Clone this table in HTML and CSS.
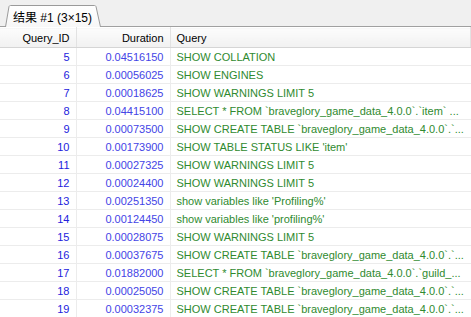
FILE: index.html
```html
<!DOCTYPE html>
<html lang="zh">
<head>
    <meta charset="UTF-8">
    <title>结果 #1</title>
    <link rel="stylesheet" href="styles.css">
</head>
<body>
    <div class="tab-bar">
        <div class="tab">
            <svg class="tab-shape" width="96" height="22" viewBox="0 0 96 22">
                <defs>
                    <linearGradient id="tabfill" x1="0" y1="0" x2="0" y2="1">
                        <stop offset="0" stop-color="#ffffff"/>
                        <stop offset="1" stop-color="#f7f7f7"/>
                    </linearGradient>
                </defs>
                <path d="M0.5 22 L4 1.5 Q4.5 0.5 5.5 0.5 L89.5 0.5 Q90.5 0.5 91 1.5 L95.5 22" fill="url(#tabfill)" stroke="#9a9a9a"/>
            </svg>
            <span class="tab-label">结果 #1 (3×15)</span>
        </div>
    </div>
    <table class="grid">
        <colgroup>
            <col class="col-id">
            <col class="col-dur">
            <col>
        </colgroup>
        <thead>
            <tr>
                <th class="num">Query_ID</th>
                <th class="num">Duration</th>
                <th>Query</th>
            </tr>
        </thead>
        <tbody>
            <tr><td class="id">5</td><td class="dur">0.04516150</td><td class="q">SHOW COLLATION</td></tr>
            <tr><td class="id">6</td><td class="dur">0.00056025</td><td class="q">SHOW ENGINES</td></tr>
            <tr><td class="id">7</td><td class="dur">0.00018625</td><td class="q">SHOW WARNINGS LIMIT 5</td></tr>
            <tr><td class="id">8</td><td class="dur">0.04415100</td><td class="q">SELECT * FROM `braveglory_game_data_4.0.0`.`item` ...</td></tr>
            <tr><td class="id">9</td><td class="dur">0.00073500</td><td class="q">SHOW CREATE TABLE `braveglory_game_data_4.0.0`.`...</td></tr>
            <tr><td class="id">10</td><td class="dur">0.00173900</td><td class="q">SHOW TABLE STATUS LIKE 'item'</td></tr>
            <tr><td class="id">11</td><td class="dur">0.00027325</td><td class="q">SHOW WARNINGS LIMIT 5</td></tr>
            <tr><td class="id">12</td><td class="dur">0.00024400</td><td class="q">SHOW WARNINGS LIMIT 5</td></tr>
            <tr><td class="id">13</td><td class="dur">0.00251350</td><td class="q">show variables like 'Profiling%'</td></tr>
            <tr><td class="id">14</td><td class="dur">0.00124450</td><td class="q">show variables like 'profiling%'</td></tr>
            <tr><td class="id">15</td><td class="dur">0.00028075</td><td class="q">SHOW WARNINGS LIMIT 5</td></tr>
            <tr><td class="id">16</td><td class="dur">0.00037675</td><td class="q">SHOW CREATE TABLE `braveglory_game_data_4.0.0`.`...</td></tr>
            <tr><td class="id">17</td><td class="dur">0.01882000</td><td class="q">SELECT * FROM `braveglory_game_data_4.0.0`.`guild_...</td></tr>
            <tr><td class="id">18</td><td class="dur">0.00025050</td><td class="q">SHOW CREATE TABLE `braveglory_game_data_4.0.0`.`...</td></tr>
            <tr><td class="id">19</td><td class="dur">0.00032375</td><td class="q">SHOW CREATE TABLE `braveglory_game_data_4.0.0`.`...</td></tr>
        </tbody>
    </table>
</body>
</html>
```

FILE: styles.css
```css
body {
    margin: 0;
    background-color: #ffffff;
    font-family: "Liberation Sans", Arial, "Noto Sans CJK SC", sans-serif;
    font-size: 11px;
    overflow: hidden;
}
.tab-bar {
    height: 26px;
    background-color: #f0f0f0;
    border-bottom: 1px solid #a0a0a0;
    box-shadow: 0 1px 0 #d8d8d8;
    display: flex;
    align-items: flex-end;
    padding-left: 5px;
}
.tab {
    position: relative;
    width: 96px;
    height: 22px;
    display: flex;
    align-items: center;
    margin-bottom: -1px;
}
.tab-shape {
    position: absolute;
    left: 0;
    top: 0;
}
.tab-label {
    position: relative;
    padding-left: 8px;
    font-size: 12px;
    color: #000000;
    font-family: "Liberation Sans", "Noto Sans CJK SC", sans-serif;
}
.grid {
    width: 100%;
    border-collapse: collapse;
    table-layout: fixed;
}
.col-id {
    width: 76px;
}
.col-dur {
    width: 94px;
}
.grid th {
    height: 19px;
    padding: 0 6px;
    font-weight: normal;
    text-align: left;
    color: #000000;
    background: linear-gradient(#fcfcfc, #f1f1f1);
    border-bottom: 1px solid #d5d5d5;
    border-right: 1px solid #e2e2e2;
    border-top: 1px solid #ffffff;
}
.grid th.num {
    text-align: right;
}
.grid td {
    height: 17px;
    padding: 0 6px;
    border-bottom: 1px solid #ececec;
    border-right: 1px solid #ececec;
    white-space: nowrap;
    overflow: hidden;
}
.grid td.id {
    text-align: right;
    color: #2222dd;
}
.grid td.dur {
    text-align: right;
    color: #4444e6;
}
.grid td.q {
    color: #2f8a2f;
    border-right: none;
}
```
